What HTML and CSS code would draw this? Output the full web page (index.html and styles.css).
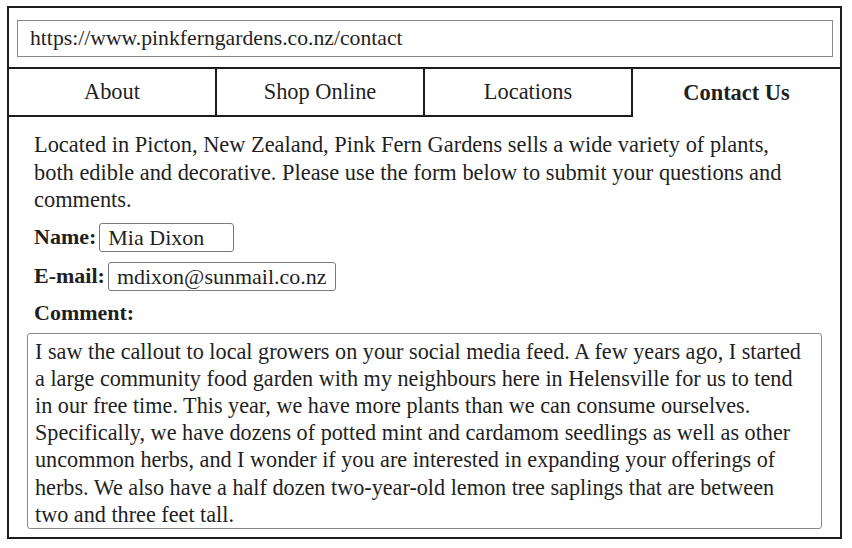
FILE: index.html
```html
<!DOCTYPE html>
<html lang="en">
<head>
<meta charset="utf-8">
<title>Pink Fern Gardens - Contact</title>
<link rel="stylesheet" href="styles.css">
</head>
<body>
<div class="window">
  <div class="urlbar">
    <div class="url">https://www.pinkferngardens.co.nz/contact</div>
  </div>
  <nav class="tabs">
    <div class="tab">About</div>
    <div class="tab">Shop Online</div>
    <div class="tab">Locations</div>
    <div class="tab active">Contact Us</div>
  </nav>
  <main class="content">
    <p class="intro">Located in Picton, New Zealand, Pink Fern Gardens sells a wide variety of plants, both edible and decorative. Please use the form below to submit your questions and comments.</p>
    <div class="field">
      <label class="label">Name:</label>
      <div class="input name-input">Mia Dixon</div>
    </div>
    <div class="field">
      <label class="label">E-mail:</label>
      <div class="input email-input">mdixon@sunmail.co.nz</div>
    </div>
    <div class="field comment-label">
      <label class="label">Comment:</label>
    </div>
    <div class="textarea">I saw the callout to local growers on your social media feed. A few years ago, I started a large community food garden with my neighbours here in Helensville for us to tend in our free time. This year, we have more plants than we can consume ourselves. Specifically, we have dozens of potted mint and cardamom seedlings as well as other uncommon herbs, and I wonder if you are interested in expanding your offerings of herbs. We also have a half dozen two-year-old lemon tree saplings that are between two and three feet tall.</div>
  </main>
</div>
</body>
</html>
```

FILE: styles.css
```css
html, body {
  margin: 0;
  padding: 0;
  background: #ffffff;
}

body {
  padding: 6px 10px 0 7px;
  font-family: "Liberation Serif", "Times New Roman", serif;
  font-size: 22px;
  color: #1f1f1f;
}

.window {
  width: 835px;
  height: 533px;
  box-sizing: border-box;
  border: 2px solid #1e1e1e;
  display: flex;
  flex-direction: column;
}

.urlbar {
  padding: 12px 7px 10px 8px;
  border-bottom: 2px solid #1e1e1e;
}

.url {
  height: 37px;
  box-sizing: border-box;
  border: 1px solid #8a8a8a;
  padding: 0 12px;
  line-height: 35px;
  font-size: 21.7px;
}

.tabs {
  display: grid;
  grid-template-columns: 208px 208px 208px 1fr;
  height: 48px;
  font-size: 22.4px;
}

.tab {
  display: flex;
  align-items: center;
  justify-content: center;
  border-right: 2px solid #1e1e1e;
  border-bottom: 2px solid #1e1e1e;
  padding-bottom: 1px;
}

.tab.active {
  border-right: none;
  border-bottom: none;
  font-weight: bold;
  padding-bottom: 0;
}

.content {
  padding: 14px 18px 0 18px;
  display: flex;
  flex-direction: column;
}

.intro {
  margin: 0 22px 0 7px;
  line-height: 27.5px;
  font-size: 22.4px;
}

.field {
  display: flex;
  align-items: center;
  gap: 3px;
  margin-left: 7px;
}

.field + .field {
  margin-top: 10px;
}

.intro + .field {
  margin-top: 9px;
}

.label {
  font-weight: bold;
}

.input {
  box-sizing: border-box;
  height: 29px;
  line-height: 27px;
  border: 1px solid #7a7a7a;
  border-radius: 3px;
  padding: 0 8px;
}

.name-input {
  width: 135px;
}

.email-input {
  width: 228px;
}

.comment-label {
  height: 28px;
}

.field.comment-label {
  margin-top: 8px;
}

.textarea {
  margin-top: 6px;
  box-sizing: border-box;
  height: 196px;
  border: 1px solid #8a8a8a;
  border-radius: 3px;
  padding: 4px 16px 0 7px;
  line-height: 27.2px;
  font-size: 22.2px;
  overflow: hidden;
}
```
